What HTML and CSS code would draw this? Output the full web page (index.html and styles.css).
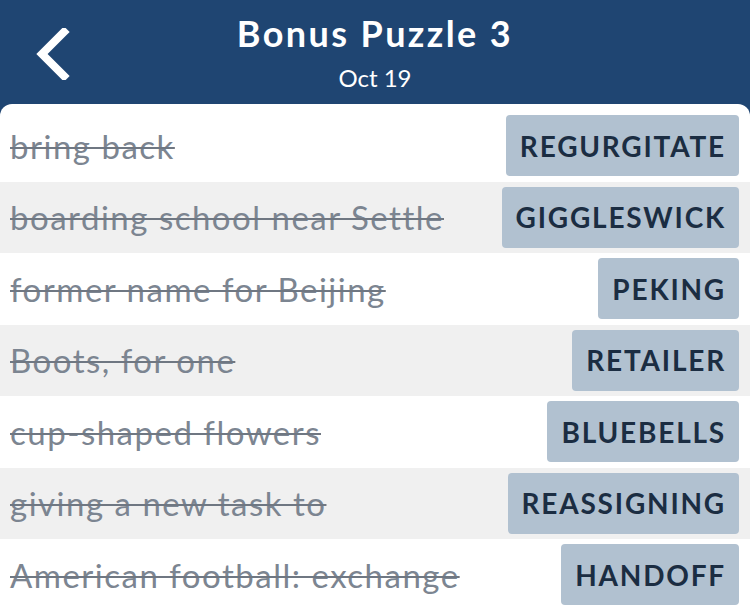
FILE: index.html
```html
<!doctype html>
<html lang="en">
  <head>
    <meta charset="UTF-8" />
    <meta name="viewport" content="width=device-width, initial-scale=1.0" />
    <title>Bonus Puzzle 3</title>
    <link rel="stylesheet" href="styles.css">
  </head>
  <body>
    <header class="top-bar">
      <a class="back" href="#" aria-label="Back">
        <svg width="36" height="52" viewBox="0 0 36 52">
          <path d="M30 4 L8 26 L30 48" fill="none" stroke="#fff" stroke-width="8" stroke-linecap="square" />
        </svg>
      </a>
      <h1>Bonus Puzzle 3</h1>
      <p class="date">Oct 19</p>
    </header>

    <main class="card">
      <ul class="clues">
        <li class="clue">
          <span class="text">bring back</span>
          <span class="answer">REGURGITATE</span>
        </li>
        <li class="clue">
          <span class="text">boarding school near Settle</span>
          <span class="answer">GIGGLESWICK</span>
        </li>
        <li class="clue">
          <span class="text">former name for Beijing</span>
          <span class="answer">PEKING</span>
        </li>
        <li class="clue">
          <span class="text">Boots, for one</span>
          <span class="answer">RETAILER</span>
        </li>
        <li class="clue">
          <span class="text">cup-shaped flowers</span>
          <span class="answer">BLUEBELLS</span>
        </li>
        <li class="clue">
          <span class="text">giving a new task to</span>
          <span class="answer">REASSIGNING</span>
        </li>
        <li class="clue">
          <span class="text">American football: exchange</span>
          <span class="answer">HANDOFF</span>
        </li>
      </ul>
    </main>
  </body>
</html>
```

FILE: styles.css
```css
html,
body {
  margin: 0;
  padding: 0;
  height: 100%;
  overflow: hidden;
}
body {
  font-family: Lato, "Noto Sans", sans-serif;
  background-color: #1f4572;
}
.top-bar {
  position: relative;
  height: 104px;
  box-sizing: border-box;
  padding-top: 13px;
  text-align: center;
  color: #fff;
}
.back {
  position: absolute;
  left: 34px;
  top: 28px;
  display: block;
}
h1 {
  margin: 0;
  font-size: 36px;
  font-weight: 700;
  line-height: 40px;
  letter-spacing: 2.4px;
}
.date {
  margin: 11px 0 0;
  font-size: 24px;
  line-height: 28px;
}
.card {
  background: #fff;
  border-radius: 12px 12px 0 0;
  padding-top: 6px;
  min-height: 510px;
}
.clues {
  list-style: none;
  margin: 0;
  padding: 0;
}
.clue {
  height: 71.5px;
  display: flex;
  align-items: center;
  justify-content: space-between;
  padding: 0 11px 0 10px;
  box-sizing: border-box;
}
.clue:nth-child(even) {
  background-color: #f0f0f0;
}
.text {
  font-size: 33px;
  letter-spacing: 1.5px;
  color: #7c8591;
  text-decoration: line-through;
  text-decoration-thickness: 2px;
  text-decoration-color: #6f7782;
}
.answer {
  height: 61px;
  display: flex;
  align-items: center;
  padding: 0 13px 0 14px;
  background-color: #b1c1d0;
  border-radius: 4px;
  color: #1b2d42;
  font-size: 28px;
  font-weight: 700;
  letter-spacing: 1.8px;
}
```
